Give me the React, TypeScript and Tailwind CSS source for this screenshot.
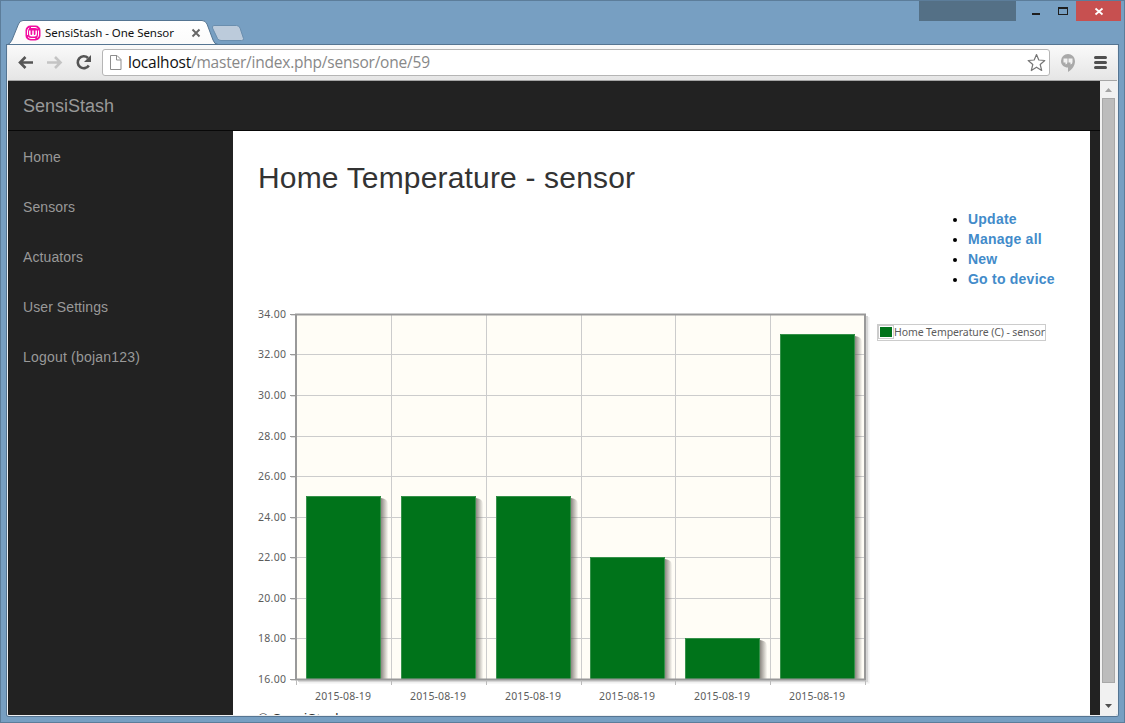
import React from "react";

const navItems = [
  { label: "Home", tracking: "tracking-[0.15px]" },
  { label: "Sensors", tracking: "tracking-[0.1px]" },
  { label: "Actuators", tracking: "tracking-[0.1px]" },
  { label: "User Settings", tracking: "tracking-[0.08px]" },
  { label: "Logout (bojan123)", tracking: "tracking-[0.2px]" },
];
const links = ["Update", "Manage all", "New", "Go to device"];
const readings = [25, 25, 25, 22, 18, 33];
const gridX = [296, 391, 486, 581, 675, 770, 865];
const barX = [306, 401, 496, 590, 685, 780];
const gridY = [314, 354, 395, 436, 476, 517, 557, 598, 638, 679];
const barTop = (v: number) => Math.floor(679 - (v - 16) * 20.28);

function TabStrip() {
  return (
    <svg width="1125" height="45" viewBox="0 0 1125 45" className="block">
      <defs>
        <linearGradient id="tab" x1="0" y1="0" x2="0" y2="1">
          <stop offset="0" stopColor="#ffffff" />
          <stop offset="1" stopColor="#fafafa" />
        </linearGradient>
      </defs>
      <rect x="919" y="1" width="97" height="20" fill="#547086" />
      <rect x="1032" y="13" width="8" height="2" fill="#1e1e1e" />
      <path d="M1058 7h10v8h-10z M1059 9v5h8V9z" fill="#1e1e1e" fillRule="evenodd" />
      <rect x="1076" y="1" width="45" height="20" fill="#c75050" />
      <path d="M1095.5 8.5l7 6M1102.5 8.5l-7 6" stroke="#fff" strokeWidth="1.8" />
      <path d="M214 25.5H236.5Q239 25.5 240 28L243.5 38.5Q244 40.5 241.5 40.5H221Q218.5 40.5 217.5 38.5L212.500 28Q212 25.5 214 25.5Z" fill="#bccbdb" stroke="#6a8eae" />
      <path d="M6.500 47V45.500Q10.500 43.500 12 40L18.500 24Q20 20.500 23 20.500H202Q205.500 20.500 207 24L213 40Q214.500 44.500 218 44.500H1115Q1117 44.500 1118 46V46H7Z" fill="url(#tab)" stroke="#557592" />
      <g transform="translate(25.500 25.500)">
        <rect width="15" height="15" rx="5" fill="#f20da0" />
        <rect x="2" y="2" width="11" height="11" rx="3.500" fill="none" stroke="#fff" strokeWidth="1" strokeDasharray="7.500 2.200" strokeDashoffset="1" />
        <path d="M4.300 5v3.500q0 1.800 1.600 1.800t1.600-1.800V5v3.500q0 1.800 1.600 1.800t1.600-1.800V5" fill="none" stroke="#fff" strokeWidth="1.500" />
      </g>
      <path d="M192.500 29.500l7 7M199.500 29.500l-7 7" stroke="#666" strokeWidth="1.900" />
      <text x="45" y="37" textLength="129" lengthAdjust="spacing" fontFamily="Noto Sans, sans-serif" fontSize="11.500" fill="#111">SensiStash - One Sensor</text>
    </svg>
  );
}

function Toolbar() {
  return (
    <div className="flex h-9 items-center border-b border-[#a6a6a6] bg-linear-to-b from-[#fafafa] to-[#e5e5e5]">
      <svg width="94" height="35" viewBox="8 45 94 35" fill="none" className="block">
        <path d="M33 62.500H20M25.500 57l-5.500 5.500 5.500 5.500" stroke="#555" strokeWidth="2.600" />
        <path d="M47 62.500H60M55 57l5.500 5.500-5.500 5.500" stroke="#c4c4c4" strokeWidth="2.600" />
        <path d="M88 58A6 6 0 1 0 88.800 65.500" stroke="#555" strokeWidth="2.600" />
        <path d="M91 55v7h-7z" fill="#555" />
      </svg>
      <div className="flex h-[27px] w-[948px] items-center rounded-[3px] border border-[#b5b5b5] bg-white">
        <svg width="25" height="25" viewBox="103 50 25 25" fill="none" className="block shrink-0">
          <path d="M110.500 55.500H117l4 4v10H110.500Z M116.500 55.500V60H121" stroke="#8d8d8d" />
        </svg>
        <svg width="890" height="25" viewBox="128 50 890 25" className="block">
          <text x="128" y="68" textLength="302" fontFamily="Open Sans, sans-serif" fontSize="15.500" fill="#888">
            <tspan fill="#111">localhost</tspan>/master/index.php/sensor/one/59
          </text>
        </svg>
        <svg width="31" height="25" viewBox="1018 50 31 25" className="block">
          <path d="M1036.500 54.500l2.300 5.500 6 .5-4.600 4 1.500 6-5.200-3.300-5.200 3.300 1.500-6-4.600-4 6-.5Z" fill="#fff" stroke="#777" strokeWidth="1.200" strokeLinejoin="round" />
        </svg>
      </div>
      <svg width="67" height="35" viewBox="1050 45 67 35" className="block">
        <path d="M1068 54a7 7 0 0 0-7 7c0 4 3 6.500 7 6.500V72c4-2.500 7-6 7-11a7 7 0 0 0-7-7Z" fill="#a9a9a9" />
        <path d="M1063.500 58.500h4V62q0 2-2 2.500v-2h-2Zm5 0h4V62q0 2-2 2.500v-2h-2Z" fill="#f2f2f2" />
        <path d="M1095.500 57.500h10M1095.500 62.500h10M1095.500 67.500h10" stroke="#505050" strokeWidth="3" strokeLinecap="round" />
      </svg>
    </div>
  );
}

function Chart() {
  return (
    <svg width="800" height="405" viewBox="255 305 800 405" className="block" fontFamily="Noto Sans, sans-serif" fontSize="10.500" fill="#5c5c5c">
      <defs>
        <linearGradient id="shade" x1="0" y1="0" x2="1" y2="0">
          <stop offset="0" stopColor="#66615b" stopOpacity=".75" />
          <stop offset="1" stopColor="#66615b" stopOpacity=".03" />
        </linearGradient>
      </defs>
      <rect x="296" y="314" width="569" height="365" fill="#fffdf6" />
      {gridX.slice(1, 6).map((x) => <path key={x} d={`M${x + 0.5} 315V679`} stroke="#ccc" />)}
      {gridY.slice(1, 9).map((y) => <path key={y} d={`M297 ${y + 0.5}H864`} stroke="#ccc" />)}
      <path d="M866 316h2v366H298v-2h568Z" fill="#999" fillOpacity=".4" />
      <path d="M868 317h1.500v366.500H299V682h569Z" fill="#999" fillOpacity=".15" />
      {readings.map((v, i) => (
        <g key={i}>
          <path d={`M${barX[i] + 75} ${barTop(v) + 2}q7 1 7 6V679h-7Z`} fill="url(#shade)" />
          <rect x={barX[i]} y={barTop(v)} width="75" height={679 - barTop(v)} fill="#00731a" />
          <path d={`M${barX[i] + 0.5} 679V${barTop(v) + 0.5}h74V679`} fill="none" stroke="#4d9e5f" strokeOpacity=".7" />
        </g>
      ))}
      <path d="M296 679V314H865V679Z" fill="none" stroke="#999" strokeWidth="2" transform="translate(0 .5)" />
      {gridX.map((x) => <path key={x} d={`M${x + 0.5} 680v5`} stroke="#bbb" />)}
      {gridY.map((y, i) => (
        <g key={y}>
          <path d={`M290 ${y + 0.5}h6`} stroke="#999" />
          <path d={`M291 ${y + 1.5}h4`} stroke="#ddd" />
          <text x="258" y={y + 4} textLength="28">{(34 - i * 2).toFixed(2)}</text>
        </g>
      ))}
      {barX.map((x) => <text key={x} x={x + 9} y="700" textLength="56">2015-08-19</text>)}
      <rect x="877.500" y="324.500" width="168" height="16" fill="#fff" stroke="#ccc" />
      <rect x="878.500" y="325.500" width="15" height="13" fill="#fff" stroke="#ccc" />
      <rect x="880" y="327" width="12" height="10" fill="#00731a" />
      <text x="894" y="336" textLength="151">Home Temperature (C) - sensor</text>
    </svg>
  );
}

function Scrollbar() {
  return (
    <div className="flex w-[17px] flex-col items-center bg-[#f1f1f1]">
      <svg width="17" height="17" className="block shrink-0"><path d="M5 11l3.500-4 3.500 4Z" fill="#a3a3a3" /></svg>
      <div className="h-[585px] w-[13px] border border-[#a8a8a8] bg-[#bcbcbc]" />
      <svg width="17" height="32" className="mt-auto block shrink-0"><path d="M5 21h7l-3.500 4Z" fill="#505050" /></svg>
    </div>
  );
}

export default function App() {
  return (
    <div className="relative flex h-[723px] w-[1125px] flex-col overflow-hidden bg-[#779fc2] font-['Liberation_Sans',sans-serif]">
      <TabStrip />
      <div className="mx-[7px] h-[671px] overflow-hidden rounded-b-[2px] border-x border-b border-[#eef0f2] shadow-[0_0_0_1px_#557592]">
        <Toolbar />
        <div className="flex h-[634px]">
          <div className="flex w-[1092px] flex-col overflow-hidden bg-[#222]">
            <header className="h-[50px] shrink-0 border-b border-[#080808] px-[15px] text-[18px] leading-[51px] text-[#999]">SensiStash</header>
            <div className="flex flex-1 overflow-hidden">
              <nav className="w-[225px] shrink-0 pt-px text-[14px] leading-[50px] text-[#999]">
                {navItems.map((n) => <div key={n.label} className={`px-[15px] ${n.tracking}`}>{n.label}</div>)}
              </nav>
              <main className="h-[584px] w-[857px] overflow-hidden bg-white pl-[22px]">
                <h1 className="mt-[30px] pl-[3px] text-[30px] leading-[33px] tracking-[0.17px] text-[#333]">Home Temperature - sensor</h1>
                <ul className="mt-[15px] ml-[713px] list-disc text-[14px] leading-5 font-bold text-black">
                  {links.map((l) => (
                    <li key={l}><span className="tracking-[0.23px] whitespace-nowrap text-[#428bca]">{l}</span></li>
                  ))}
                </ul>
                <div className="mt-[16px] h-[404px]"><Chart /></div>
                <footer className="pl-[3px] text-[14px] leading-5 text-[#333]">© SensiStash</footer>
              </main>
            </div>
          </div>
          <Scrollbar />
        </div>
      </div>
      <div className="pointer-events-none absolute inset-0 border border-[#5c7d9a]" />
    </div>
  );
}
